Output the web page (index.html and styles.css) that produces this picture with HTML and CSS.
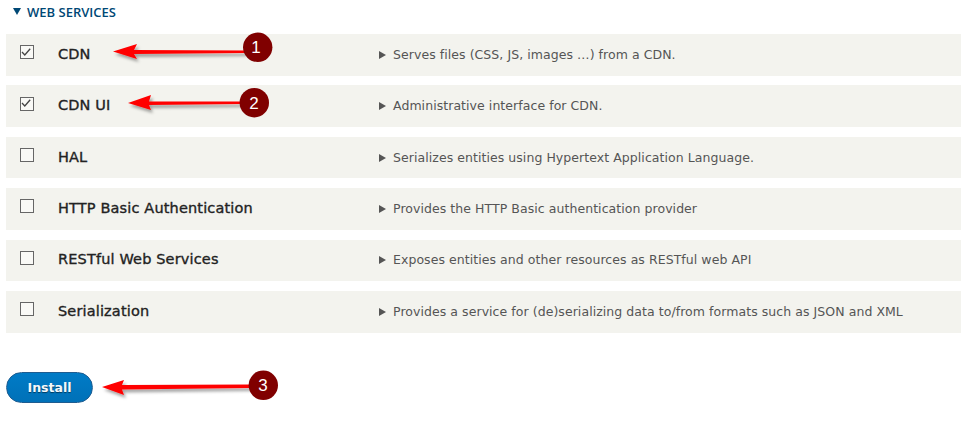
FILE: index.html
```html
<!DOCTYPE html>
<html lang="en">
    <head>
        <meta name="viewport" content="width=device-width, initial-scale=1.0">
        <title>Web Services</title>
        <link rel="stylesheet" href="styles.css">
    </head>
    <body>
        <div class="group-title"><span class="caret-down"></span>WEB SERVICES</div>
        <div class="rows">
            <div class="row">
                <span class="box"><svg viewBox="0 0 14 14" width="14" height="14"><path d="M3 7 L5.800 10 L11.200 3.800" fill="none" stroke="#444" stroke-width="1.3"/></svg></span>
                <span class="name">CDN</span>
                <span class="caret-right"></span>
                <span class="desc">Serves files (CSS, JS, images …) from a CDN.</span>
            </div>
            <div class="row">
                <span class="box"><svg viewBox="0 0 14 14" width="14" height="14"><path d="M3 7 L5.800 10 L11.200 3.800" fill="none" stroke="#444" stroke-width="1.3"/></svg></span>
                <span class="name">CDN UI</span>
                <span class="caret-right"></span>
                <span class="desc">Administrative interface for CDN.</span>
            </div>
            <div class="row">
                <span class="box"></span>
                <span class="name">HAL</span>
                <span class="caret-right"></span>
                <span class="desc">Serializes entities using Hypertext Application Language.</span>
            </div>
            <div class="row">
                <span class="box"></span>
                <span class="name">HTTP Basic Authentication</span>
                <span class="caret-right"></span>
                <span class="desc">Provides the HTTP Basic authentication provider</span>
            </div>
            <div class="row">
                <span class="box"></span>
                <span class="name">RESTful Web Services</span>
                <span class="caret-right"></span>
                <span class="desc">Exposes entities and other resources as RESTful web API</span>
            </div>
            <div class="row">
                <span class="box"></span>
                <span class="name">Serialization</span>
                <span class="caret-right"></span>
                <span class="desc">Provides a service for (de)serializing data to/from formats such as JSON and XML</span>
            </div>
        </div>
        <button type="button" class="install">Install</button>

        <!-- red arrows and numbered markers drawn over the screenshot -->
        <svg class="notes" width="961" height="424" viewBox="0 0 961 424">
            <defs>
                <filter id="soft" x="-10%" y="-40%" width="125%" height="200%">
                    <feDropShadow dx="2" dy="3" stdDeviation="1.5" flood-color="#000" flood-opacity="0.35"/>
                </filter>
            </defs>
            <g filter="url(#soft)">
                <path d="M113 51.500 L137 44 L134 50 L245 50.500 L245 53 L134 54 L137 59 Z" fill="#f00"/>
                <path d="M128 103 L151 95 L149 101.500 L242 101.500 L242 104 L149 105 L151 110 Z" fill="#f00"/>
                <path d="M102 387 L124 380 L122 385 L250 384.500 L250 388 L122 389.500 L124 395 Z" fill="#f00"/>
            </g>
            <g class="dot">
                <circle cx="257.700" cy="47.300" r="14.700"/>
                <circle cx="254.300" cy="102.700" r="14.700"/>
                <circle cx="263.300" cy="385.300" r="14.700"/>
            </g>
            <g class="num">
                <text x="256" y="53">1</text>
                <text x="254" y="108.500">2</text>
                <text x="263" y="391">3</text>
            </g>
        </svg>
    </body>
</html>
```

FILE: styles.css
```css
body {
    margin: 0;
    padding: 0 0 0 6px;
    height: 424px;
    overflow: hidden;
    position: relative;
    background: #fff;
    font-family: "DejaVu Sans", sans-serif;
}

.group-title {
    display: flex;
    align-items: center;
    height: 23px;
    padding-left: 7px;
    font-family: "Open Sans", sans-serif;
    font-size: 13px;
    font-weight: 600;
    color: #004875;
}

.caret-down {
    width: 0;
    height: 0;
    margin-right: 6px;
    border-left: 4px solid transparent;
    border-right: 4px solid transparent;
    border-top: 7px solid #004875;
}

.rows {
    display: flex;
    flex-direction: column;
    gap: 9.800px;
    margin-top: 11px;
}

.row {
    display: flex;
    align-items: center;
    height: 41.600px;
    background: #f3f3ee;
}

.box {
    display: flex;
    box-sizing: border-box;
    width: 14px;
    height: 14px;
    margin: -5px 0 0 13.500px;
    border: 1.500px solid #666;
    background: #f9f9f6;
}

.box svg {
    flex: none;
    margin: -1.500px;
}

.name {
    width: 321px;
    margin: -2px 0 0 24.500px;
    font-size: 14.500px;
    color: #222;
    -webkit-text-stroke: 0.35px #222;
    letter-spacing: 0.15px;
}

.caret-right {
    width: 0;
    height: 0;
    margin: 0 7px 0 0;
    border-top: 4px solid transparent;
    border-bottom: 4px solid transparent;
    border-left: 7px solid #555;
}

.desc {
    margin-top: -1px;
    font-size: 12.500px;
    letter-spacing: 0.06px;
    color: #555;
}

.install {
    display: block;
    width: 87px;
    height: 31px;
    margin-top: 39px;
    padding: 0;
    border: 1px solid #1e5c90;
    border-radius: 16px;
    background: linear-gradient(#007bc6, #0071b8);
    color: #f4f8fb;
    font-family: "DejaVu Sans", sans-serif;
    font-size: 12.500px;
    font-weight: bold;
    text-shadow: 0 1px 1px rgba(0, 0, 0, 0.5);
}

.notes {
    position: absolute;
    left: 0;
    top: 0;
}

.dot circle {
    fill: #800000;
}

.num text {
    fill: #fff;
    font-family: "Liberation Sans", sans-serif;
    font-size: 17px;
    text-anchor: middle;
}
```
